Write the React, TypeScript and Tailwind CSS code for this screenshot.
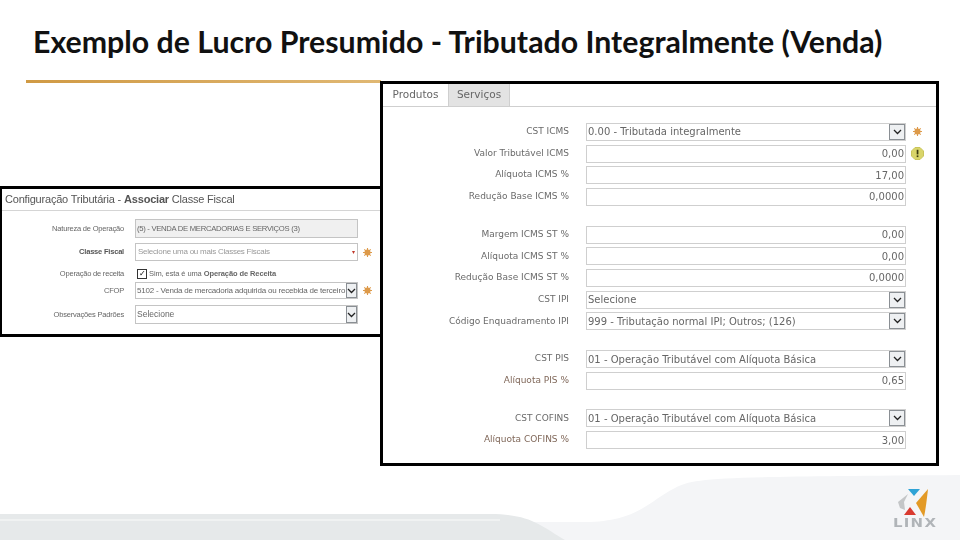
const UI = "font-['DejaVu_Sans',sans-serif]";
const LEFT = "font-['Liberation_Sans',sans-serif]";

function Chevron({ className = "" }: { className?: string }) {
  return (
    <span className={`flex h-full items-center justify-center border border-[#8a8f94] bg-[#eef0f2] ${className}`}>
      <svg width="9" height="6" viewBox="0 0 9 6" fill="none" stroke="#222" strokeWidth="1.3">
        <path d="M1 1l3.5 3.5L8 1" />
      </svg>
    </span>
  );
}

function Req() {
  return (
    <svg width="9" height="9" viewBox="0 0 9 9" className="shrink-0">
      <circle cx="4.5" cy="4.5" r="3" fill="#dd9a4a" />
      <path d="M4.5 0v9M0 4.5h9M1.3 1.3l6.4 6.4M7.7 1.3L1.3 7.7" stroke="#dd9a4a" strokeWidth="1.1" />
    </svg>
  );
}

function Warn() {
  return (
    <svg width="13" height="13" viewBox="0 0 13 13" className="shrink-0">
      <path d="M4 .5h5L12.5 4v5L9 12.5H4L.5 9V4z" fill="#d9d56a" stroke="#c9c45a" />
      <rect x="5.7" y="2.8" width="1.7" height="4.6" fill="#3b3a10" />
      <rect x="5.7" y="8.4" width="1.7" height="1.7" fill="#3b3a10" />
    </svg>
  );
}

type Row = { label: string; value: string; select?: boolean; icon?: "req" | "warn"; red?: boolean };

const groups: Row[][] = [
  [
    { label: "CST ICMS", value: "0.00 - Tributada integralmente", select: true, icon: "req" },
    { label: "Valor Tributável ICMS", value: "0,00", icon: "warn" },
    { label: "Alíquota ICMS %", value: "17,00" },
    { label: "Redução Base ICMS %", value: "0,0000" },
  ],
  [
    { label: "Margem ICMS ST %", value: "0,00" },
    { label: "Alíquota ICMS ST %", value: "0,00" },
    { label: "Redução Base ICMS ST %", value: "0,0000" },
    { label: "CST IPI", value: "Selecione", select: true },
    { label: "Código Enquadramento IPI", value: "999 - Tributação normal IPI; Outros; (126)", select: true },
  ],
  [
    { label: "CST PIS", value: "01 - Operação Tributável com Alíquota Básica", select: true },
    { label: "Alíquota PIS %", value: "0,65", red: true },
  ],
  [
    { label: "CST COFINS", value: "01 - Operação Tributável com Alíquota Básica", select: true },
    { label: "Alíquota COFINS %", value: "3,00", red: true },
  ],
];

function ProductRow({ r }: { r: Row }) {
  return (
    <div className="flex h-[21.7px] items-center">
      <span className={`w-[186px] shrink-0 whitespace-nowrap text-right text-[9px] ${r.red ? "text-[#80685a]" : "text-[#6a6a6a]"}`}>
        {r.label}
      </span>
      <div className="ml-[17px] flex h-[18px] w-[320px] shrink-0 items-center justify-between border border-[#cfcfcf] bg-white pl-[1px] text-[10px] text-[#666]">
        {r.select ? (
          <>
            <span className="whitespace-nowrap">{r.value}</span>
            <Chevron className="w-[16px]" />
          </>
        ) : (
          <span className="w-full pr-[1px] text-right">{r.value}</span>
        )}
      </div>
      <span className="ml-[4px] flex w-[14px] justify-center">
        {r.icon === "req" && <Req />}
        {r.icon === "warn" && <Warn />}
      </span>
    </div>
  );
}

function FiscalRow({ label, bold, children, h, mt }: { label: string; bold?: boolean; children: React.ReactNode; h: string; mt: string }) {
  return (
    <div className={`flex items-center ${h} ${mt}`}>
      <span className={`w-[122px] shrink-0 whitespace-nowrap text-right text-[7.5px] tracking-[-0.2px] ${bold ? "font-bold text-[#555]" : "text-[#666]"}`}>{label}</span>
      <div className="ml-[11px] flex h-full items-center">{children}</div>
    </div>
  );
}

export default function App() {
  return (
    <div className="relative h-[540px] w-[960px] overflow-hidden bg-white">
      <svg width="960" height="540" viewBox="0 0 960 540" className="absolute inset-0">
        <path d="M430 522H590C640 520 650 500 675 488C695 477 720 477 960 475V540H565Z" fill="#f4f5f7" />
        <path d="M0 514H490C530 514 540 525 565 540H0Z" fill="#e6e9ea" />
        <rect x="0" y="519" width="500" height="2" fill="#f0f2f2" />
      </svg>

      <div className="relative pl-[33px] pt-[24px]">
        <h1 className="whitespace-nowrap text-[30.3px] font-bold leading-[34px] text-[#111] font-['Lato',sans-serif]">
          Exemplo de Lucro Presumido - Tributado Integralmente (Venda)
        </h1>
      </div>
      <div className="relative ml-[26px] mt-[22px] h-[3px] w-[355px] bg-gradient-to-r from-[#d09a44] to-[#e0b873]" />

      <section className={`absolute left-[380px] top-[81px] h-[385px] w-[559px] border-[3px] border-black bg-white ${UI}`}>
        <div className="blur-[0.35px]">
          <div className="flex h-[23px] border-b border-[#cfcfcf]">
            <div className="flex w-[65px] items-center justify-center text-[10.5px] text-[#666]">Produtos</div>
            <div className="flex w-[62px] items-center justify-center border-x border-[#cfcfcf] bg-[#e3e3e3] text-[10.5px] text-[#666]">Serviços</div>
          </div>
          <div className="pt-[14px]">
            <div className="flex flex-col gap-[16px]">
              {groups.map((g, i) => (
                <div key={i}>
                  {g.map((r) => (
                    <ProductRow key={r.label} r={r} />
                  ))}
                </div>
              ))}
            </div>
          </div>
        </div>
      </section>

      <section className={`absolute left-0 top-[186px] h-[151px] w-[383px] border-y-[3px] border-l-[2px] border-r-[3px] border-black bg-white ${LEFT}`}>
        <div className="blur-[0.35px]">
          <div className="flex h-[22px] items-center border-b border-[#d5d5d5] pl-[3px] text-[11px] tracking-[-0.2px] text-[#555]">
            Configuração Tributária - <b className="ml-[3px]">Associar</b>&nbsp;Classe Fiscal
          </div>
          <div className="pt-[8px]">
            <FiscalRow label="Natureza de Operação" h="h-[19px]" mt="mt-0">
              <div className="flex h-full w-[223px] items-center whitespace-nowrap border border-[#c4c4c4] bg-[#f0f0f0] pl-[1px] text-[7.7px] tracking-[-0.3px] text-[#666]">
                (5) - VENDA DE MERCADORIAS E SERVIÇOS (3)
              </div>
            </FiscalRow>
            <FiscalRow label="Classe Fiscal" bold h="h-[18px]" mt="mt-[5px]">
              <div className="flex h-full w-[223px] items-center justify-between whitespace-nowrap border border-[#c4c4c4] bg-white px-[2px] text-[8px] tracking-[-0.25px] text-[#999]">
                Selecione uma ou mais Classes Fiscais
                <span className="text-[6px] text-[#c0392b]">▾</span>
              </div>
              <span className="ml-[5px] shrink-0"><Req /></span>
            </FiscalRow>
            <FiscalRow label="Operação de receita" h="h-[13px]" mt="mt-[6px]">
              <span className="ml-[2px] flex h-[10px] w-[10px] shrink-0 items-center justify-center border border-[#333] bg-white text-[8px] leading-none text-black">✓</span>
              <span className="ml-[2px] whitespace-nowrap text-[7.5px] tracking-[-0.1px] text-[#666]">
                Sim, esta é uma <b>Operação de Receita</b>
              </span>
            </FiscalRow>
            <FiscalRow label="CFOP" h="h-[17px]" mt="mt-[2px]">
              <div className="flex h-full w-[223px] items-center justify-between border border-[#c4c4c4] bg-white pl-[1px] text-[8px] tracking-[-0.2px] text-[#666]">
                <span className="whitespace-nowrap">5102 - Venda de mercadoria adquirida ou recebida de terceiro</span>
                <Chevron className="w-[11px] shrink-0" />
              </div>
              <span className="ml-[5px] shrink-0"><Req /></span>
            </FiscalRow>
            <FiscalRow label="Observações Padrões" h="h-[19px]" mt="mt-[6px]">
              <div className="flex h-full w-[223px] items-center justify-between border border-[#c4c4c4] bg-white pl-[1px] text-[8.5px] text-[#666]">
                Selecione
                <Chevron className="w-[11px]" />
              </div>
            </FiscalRow>
          </div>
        </div>
      </section>

      <div className="absolute left-[892px] top-[488px] flex w-[46px] flex-col items-center">
        <svg width="46" height="30" viewBox="0 0 46 30">
          <path d="M16 1H28L22 8Z" fill="#2fa3d6" />
          <path d="M36 1L24 15L32 29C34 19 35 10 36 1Z" fill="#e39a26" />
          <path d="M16 6L6 14L8 20L13 22L12 14Z" fill="#c4c6c8" />
          <path d="M18 19L12 27H24Z" fill="#d93a30" />
        </svg>
        <span className="scale-x-[1.3] whitespace-nowrap text-[11.5px] font-bold leading-[11px] tracking-[1px] text-[#b0b4b8] font-['DejaVu_Sans',sans-serif]">LINX</span>
      </div>
    </div>
  );
}
